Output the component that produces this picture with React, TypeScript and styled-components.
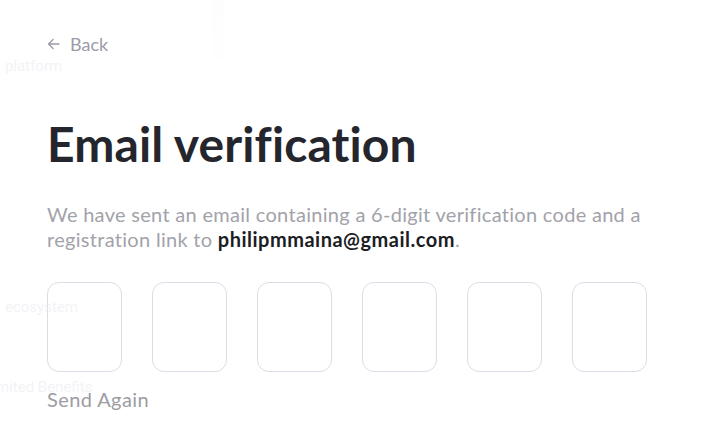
import React from "react";
import styled, { createGlobalStyle } from "styled-components";

const GlobalStyle = createGlobalStyle`
  html, body {
    margin: 0;
    padding: 0;
    background: #ffffff;
  }
  body {
    font-family: "Lato", "Noto Sans", sans-serif;
    overflow: hidden;
  }
`;

const Page = styled.div`
  position: relative;
  width: 715px;
  height: 425px;
  overflow: hidden;
  background: #ffffff;
`;

// faded sidebar that shows through behind the form panel
const Backdrop = styled.div`
  position: absolute;
  inset: 0;
  pointer-events: none;
`;

const GhostLabel = styled.span<{ top: number; left: number }>`
  position: absolute;
  top: ${(p) => p.top}px;
  left: ${(p) => p.left}px;
  font-family: "Roboto", sans-serif;
  font-size: 15px;
  color: #f3f3f6;
  white-space: nowrap;
`;

const GhostEdge = styled.div`
  position: absolute;
  top: 0;
  left: 213px;
  width: 10px;
  height: 60px;
  background: linear-gradient(180deg, #fdfdfd, #fefefe);
`;

const Panel = styled.div`
  position: relative;
  display: flex;
  flex-direction: column;
  padding: 33px 0 0 47px;
`;

const BackLink = styled.a`
  display: flex;
  align-items: center;
  gap: 10px;
  font-size: 18px;
  color: #9c9ca8;
  text-decoration: none;
  cursor: pointer;
  height: 22px;
`;

const Title = styled.h1`
  margin: 61px 0 0;
  font-size: 48px;
  font-weight: 700;
  color: #25262d;
  line-height: 56px;
  letter-spacing: 0.1px;
`;

const Description = styled.p`
  margin: 30px 0 0;
  width: 640px;
  font-size: 20px;
  line-height: 25px;
  letter-spacing: 0.3px;
  color: #a2a2aa;

  strong {
    color: #1c1d24;
    font-weight: 700;
    letter-spacing: 0.5px;
  }
`;

const CodeRow = styled.div`
  display: flex;
  gap: 30px;
  margin-top: 30px;
`;

const CodeBox = styled.input`
  width: 75px;
  height: 90px;
  box-sizing: border-box;
  border: 1px solid #dcdde6;
  border-radius: 12px;
  background: transparent;
  font-family: inherit;
  font-size: 28px;
  text-align: center;
  outline: none;
`;

const SendAgain = styled.button`
  align-self: flex-start;
  margin-top: 15px;
  padding: 0;
  border: none;
  background: none;
  font-family: inherit;
  font-size: 20px;
  letter-spacing: 0.4px;
  color: #9c9ca3;
  cursor: pointer;
`;

const ArrowLeft = () => (
  <svg width="13" height="12" viewBox="0 0 13 12" fill="none">
    <path
      d="M12 6H1.5M6 1.5L1.5 6L6 10.5"
      stroke="#9c9ca8"
      strokeWidth="1.4"
      strokeLinecap="round"
      strokeLinejoin="round"
    />
  </svg>
);

export default function App() {
  const digits = [0, 1, 2, 3, 4, 5];
  return (
    <Page>
      <GlobalStyle />
      <Backdrop>
        <GhostEdge />
        <GhostLabel top={57} left={5}>platform</GhostLabel>
        <GhostLabel top={298} left={5}>ecosystem</GhostLabel>
        <GhostLabel top={378} left={-4}>mited Benefits</GhostLabel>
      </Backdrop>
      <Panel>
        <BackLink>
          <ArrowLeft />
          Back
        </BackLink>
        <Title>Email verification</Title>
        <Description>
          We have sent an email containing a 6-digit verification code and a
          registration link to <strong>philipmmaina@gmail.com</strong>.
        </Description>
        <CodeRow>
          {digits.map((d) => (
            <CodeBox key={d} maxLength={1} />
          ))}
        </CodeRow>
        <SendAgain>Send Again</SendAgain>
      </Panel>
    </Page>
  );
}
